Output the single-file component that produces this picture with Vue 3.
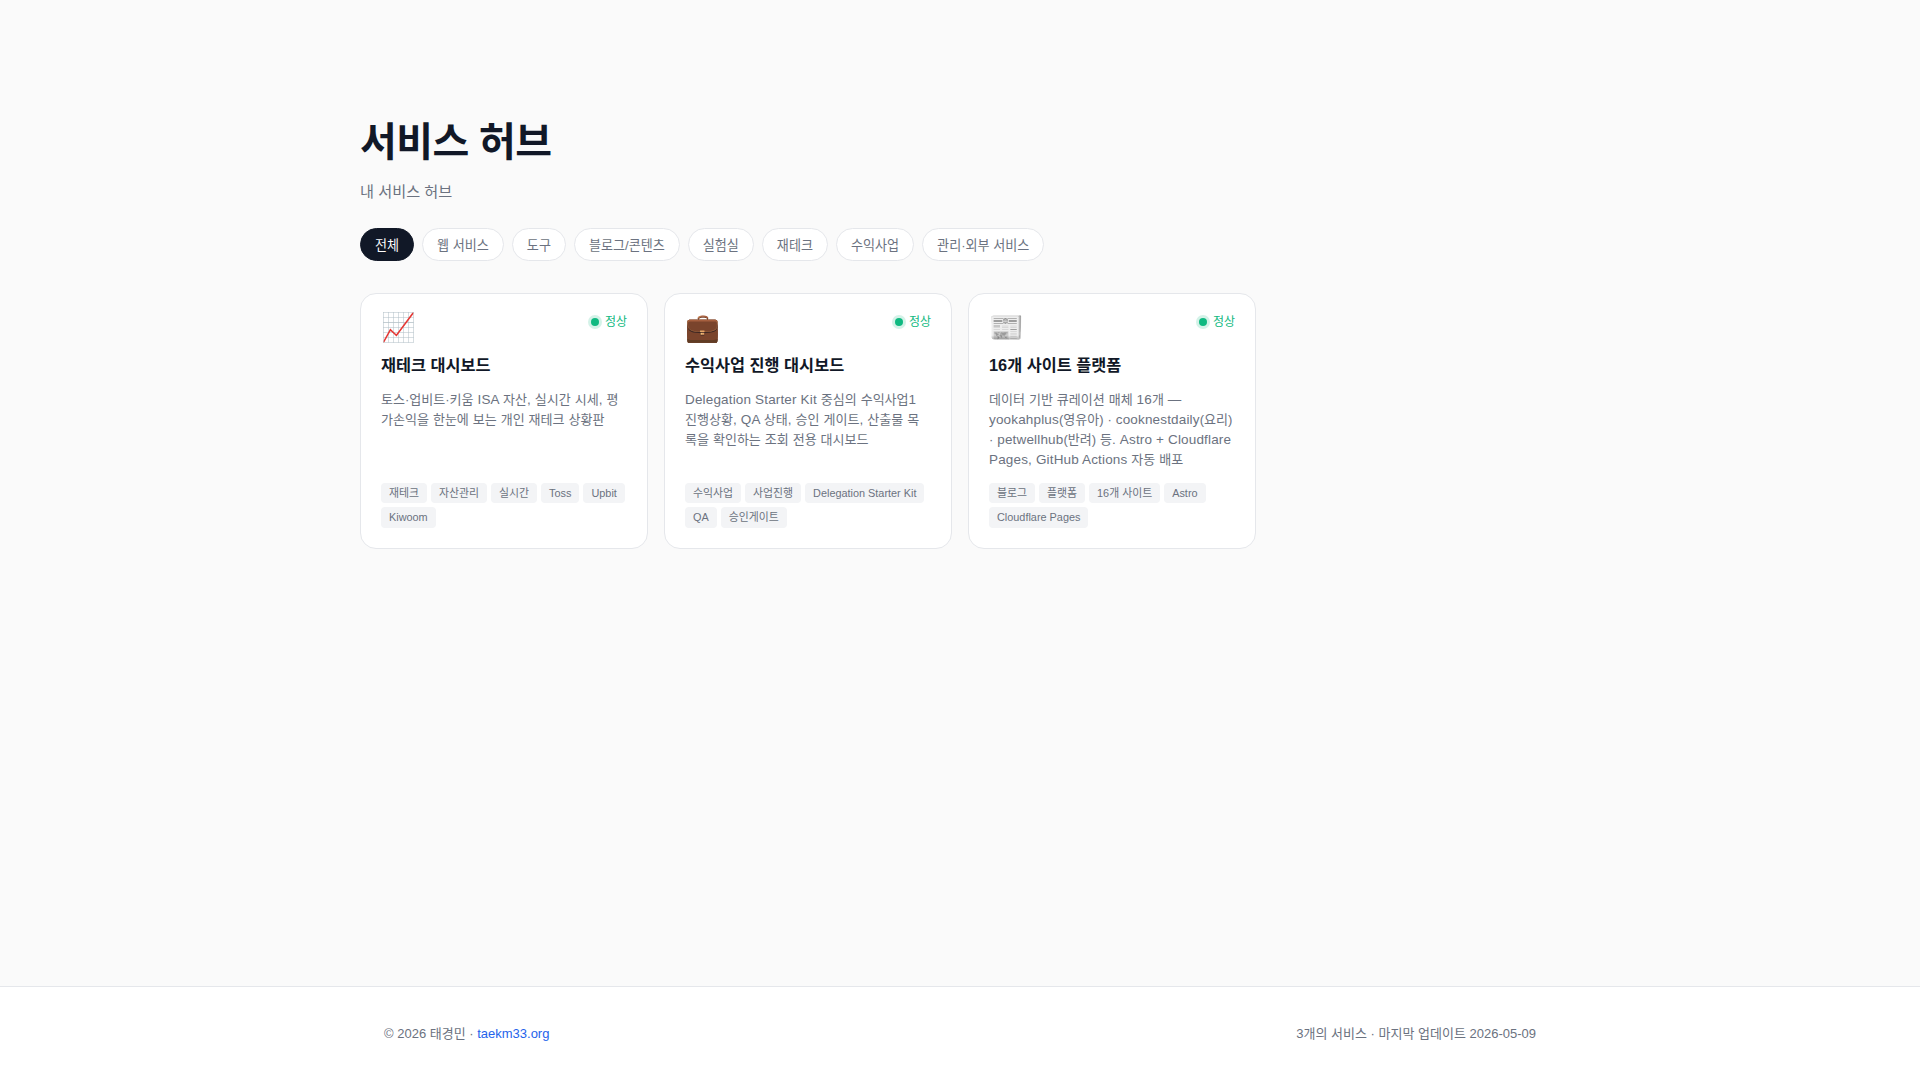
<script setup>
const filters = ['전체', '웹 서비스', '도구', '블로그/콘텐츠', '실험실', '재테크', '수익사업', '관리·외부 서비스']
const cards = [
  {
    icon: '📈',
    title: '재테크 대시보드',
    desc: '토스·업비트·키움 ISA 자산, 실시간 시세, 평가손익을 한눈에 보는 개인 재테크 상황판',
    tags: ['재테크', '자산관리', '실시간', 'Toss', 'Upbit', 'Kiwoom'],
  },
  {
    icon: '💼',
    title: '수익사업 진행 대시보드',
    desc: 'Delegation Starter Kit 중심의 수익사업1 진행상황, QA 상태, 승인 게이트, 산출물 목록을 확인하는 조회 전용 대시보드',
    tags: ['수익사업', '사업진행', 'Delegation Starter Kit', 'QA', '승인게이트'],
  },
  {
    icon: '📰',
    title: '16개 사이트 플랫폼',
    desc: '데이터 기반 큐레이션 매체 16개 — yookahplus(영유아) · cooknestdaily(요리) · petwellhub(반려) 등. Astro + Cloudflare Pages, GitHub Actions 자동 배포',
    tags: ['블로그', '플랫폼', '16개 사이트', 'Astro', 'Cloudflare Pages'],
  },
]
// Hangul (with brackets and dots) and Latin runs use slightly different metrics in the description.
const KO = /([\uAC00-\uD7A3()·]+)/
const runs = (text) =>
  text
    .split(KO)
    .filter(Boolean)
    .map((t) => ({ t, cls: /^[\uAC00-\uD7A3()·]+$/.test(t) ? 'ko' : 'lat' }))
</script>

<template>
  <div class="page">
    <main class="main">
      <h1 class="title">서비스 허브</h1>
      <p class="subtitle">내 서비스 허브</p>
      <div class="filters">
        <button v-for="(f, i) in filters" :key="f" class="chip" :class="{ active: i === 0 }">{{ f }}</button>
      </div>
      <section class="grid">
        <article v-for="c in cards" :key="c.title" class="card">
          <div class="card-head">
            <span class="icon">{{ c.icon }}</span>
            <span class="status"><i class="dot"></i>정상</span>
          </div>
          <h2 class="card-title">{{ c.title }}</h2>
          <p class="desc"><span v-for="(r, i) in runs(c.desc)" :key="i" :class="r.cls">{{ r.t }}</span></p>
          <div class="tags">
            <span v-for="t in c.tags" :key="t" class="tag">{{ t }}</span>
          </div>
        </article>
      </section>
    </main>
    <footer class="footer">
      <div class="footer-inner">
        <span>© 2026 태경민 · <a class="link">taekm33.org</a></span>
        <span>3개의 서비스 · 마지막 업데이트 2026-05-09</span>
      </div>
    </footer>
  </div>
</template>

<style>
html, body { margin: 0; background: #fafafa; }
</style>

<style scoped>
.page {
  min-height: 100vh;
  display: flex;
  flex-direction: column;
  background: #fafafa;
  color: #111827;
  font-family: "Liberation Sans", "Noto Sans CJK KR", sans-serif;
  box-sizing: border-box;
}
.main {
  flex: 1;
  width: 1200px;
  margin: 0 auto;
  padding-top: 114px;
  box-sizing: border-box;
}
.title {
  margin: 0;
  font-size: 40px;
  line-height: 56px;
  font-weight: 700;
  letter-spacing: -0.6px;
  color: #111827;
}
.subtitle {
  margin: 10px 0 0;
  font-size: 15.2px;
  line-height: 24px;
  color: #6b7280;
}
.filters {
  display: flex;
  gap: 8px;
  margin-top: 24px;
}
.chip {
  font: inherit;
  font-size: 13.09px;
  line-height: 19px;
  padding: 7px 14px 5px;
  border: 1px solid #e5e7eb;
  border-radius: 999px;
  background: #fff;
  color: #6b7280;
}
.chip.active {
  background: #111827;
  border-color: #111827;
  color: #fff;
}
.grid {
  display: grid;
  grid-template-columns: repeat(auto-fill, minmax(280px, 1fr));
  gap: 16px;
  margin-top: 32px;
}
.card {
  display: flex;
  flex-direction: column;
  padding: 20px;
  background: #fff;
  border: 1px solid #e5e7eb;
  border-radius: 16px;
}
.card-head {
  display: flex;
  justify-content: space-between;
  align-items: flex-start;
}
.icon {
  font-size: 28px;
  line-height: 28px;
}
.status {
  display: flex;
  align-items: center;
  gap: 6px;
  font-size: 12px;
  line-height: 16px;
  color: #10b981;
}
.dot {
  width: 8px;
  height: 8px;
  border-radius: 50%;
  background: #10b981;
  box-shadow: 0 0 0 3px rgba(16, 185, 129, 0.18);
}
.card-title {
  margin: 11px 0 0;
  font-size: 16.32px;
  line-height: 24px;
  font-weight: 700;
  color: #111827;
}
.desc {
  margin: 13px 0 0;
  flex: 1;
  font-size: 13.5px;
  line-height: 20px;
  color: #6b7280;
}
.ko {
  font-size: 13.04px;
}
.lat {
  letter-spacing: 0.16px;
}
.tags {
  display: flex;
  flex-wrap: wrap;
  gap: 4px;
  margin-top: 12.7px;
}
.tag {
  padding: 2px 8px;
  font-size: 10.88px;
  line-height: 16.5px;
  border-radius: 4px;
  background: #f3f4f6;
  color: #6b7280;
}
.footer {
  border-top: 1px solid #e5e7eb;
  background: #fff;
}
.footer-inner {
  width: 1200px;
  margin: 0 auto;
  padding: 36px 24px;
  box-sizing: border-box;
  display: flex;
  justify-content: space-between;
  font-size: 13px;
  line-height: 21px;
  color: #6b7280;
}
.link {
  color: #2563eb;
}
</style>
